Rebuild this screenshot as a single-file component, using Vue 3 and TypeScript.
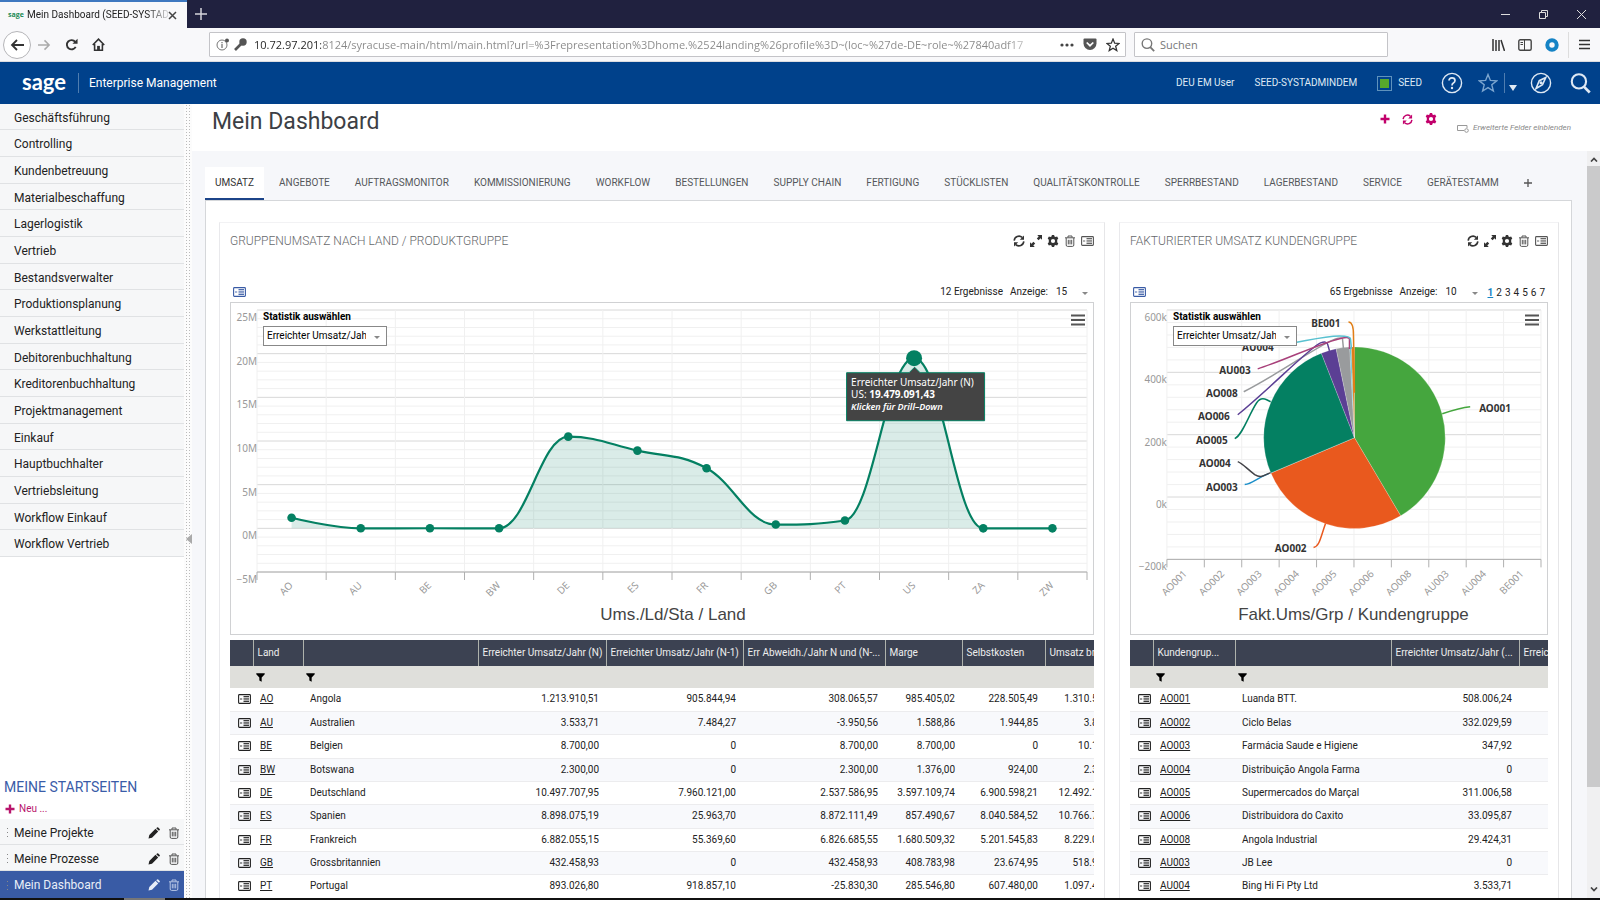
<script setup lang="ts">
import { ref } from 'vue'

interface Point { x: number; y: number }

const address = ref('10.72.97.201:8124/syracuse-main/html/main.html?url=%3Frepresentation%3Dhome.%2524landing%26profile%3D~(loc~%27de-DE~role~%27840adf17')

const modules = [
  'Geschäftsführung', 'Controlling', 'Kundenbetreuung', 'Materialbeschaffung', 'Lagerlogistik', 'Vertrieb',
  'Bestandsverwalter', 'Produktionsplanung', 'Werkstattleitung', 'Debitorenbuchhaltung', 'Kreditorenbuchhaltung',
  'Projektmanagement', 'Einkauf', 'Hauptbuchhalter', 'Vertriebsleitung', 'Workflow Einkauf', 'Workflow Vertrieb',
]
const startPages = ['Meine Projekte', 'Meine Prozesse', 'Mein Dashboard']
const activePage = ref('Mein Dashboard')

const tabs = [
  'UMSATZ', 'ANGEBOTE', 'AUFTRAGSMONITOR', 'KOMMISSIONIERUNG', 'WORKFLOW', 'BESTELLUNGEN', 'SUPPLY CHAIN', 'FERTIGUNG',
  'STÜCKLISTEN', 'QUALITÄTSKONTROLLE', 'SPERRBESTAND', 'LAGERBESTAND', 'SERVICE', 'GERÄTESTAMM',
]
const activeTab = ref('UMSATZ')
const tools = [
  { icon: 'refresh', label: 'Aktualisieren' },
  { icon: 'expand', label: 'Maximieren' },
  { icon: 'gear', label: 'Einstellungen' },
  { icon: 'trash', label: 'Löschen' },
  { icon: 'card', label: 'Details' },
]

const countryRows = [
  ['AO', 'Angola', '1.213.910,51', '905.844,94', '308.065,57', '985.405,02', '228.505,49', '1.310.500,00'],
  ['AU', 'Australien', '3.533,71', '7.484,27', '-3.950,56', '1.588,86', '1.944,85', '3.800,00'],
  ['BE', 'Belgien', '8.700,00', '0', '8.700,00', '8.700,00', '0', '10.100,00'],
  ['BW', 'Botswana', '2.300,00', '0', '2.300,00', '1.376,00', '924,00', '2.300,00'],
  ['DE', 'Deutschland', '10.497.707,95', '7.960.121,00', '2.537.586,95', '3.597.109,74', '6.900.598,21', '12.492.100,00'],
  ['ES', 'Spanien', '8.898.075,19', '25.963,70', '8.872.111,49', '857.490,67', '8.040.584,52', '10.766.700,00'],
  ['FR', 'Frankreich', '6.882.055,15', '55.369,60', '6.826.685,55', '1.680.509,32', '5.201.545,83', '8.229.000,00'],
  ['GB', 'Grossbritannien', '432.458,93', '0', '432.458,93', '408.783,98', '23.674,95', '518.900,00'],
  ['PT', 'Portugal', '893.026,80', '918.857,10', '-25.830,30', '285.546,80', '607.480,00', '1.097.400,00'],
]
const groupRows = [
  ['AO001', 'Luanda BTT.', '508.006,24'],
  ['AO002', 'Ciclo Belas', '332.029,59'],
  ['AO003', 'Farmácia Saude e Higiene', '347,92'],
  ['AO004', 'Distribuição Angola Farma', '0'],
  ['AO005', 'Supermercados do Marçal', '311.006,58'],
  ['AO006', 'Distribuidora do Caxito', '33.095,87'],
  ['AO008', 'Angola Industrial', '29.424,31'],
  ['AU003', 'JB Lee', '0'],
  ['AU004', 'Bing Hi Fi Pty Ltd', '3.533,71'],
]

/* Area chart: revenue per country in millions */
const area = { left: 26, top: 7, right: 856, bottom: 269 }
const areaStep = (area.right - area.left) / 12
const areaUnit = (area.bottom - area.top) / 30
const revenue = [
  ['AO', 1.214], ['AU', 0.004], ['BE', 0.009], ['BW', 0.002], ['DE', 10.498], ['ES', 8.898],
  ['FR', 6.882], ['GB', 0.432], ['PT', 0.893], ['US', 19.479], ['ZA', 0], ['ZW', 0],
] as [string, number][]
const points: Point[] = revenue.map(([, v], i) => ({
  x: area.left + areaStep * (i + 0.5),
  y: area.top + (25 - v) * areaUnit,
}))
const peak = points[9]
const zeroY = area.top + 25 * areaUnit

function spline(pts: Point[]): string {
  let path = `M${pts[0].x} ${pts[0].y}`
  let out: Point = { ...pts[0] }
  for (let i = 1; i < pts.length; i++) {
    const p = pts[i]
    const prev = pts[i - 1]
    const next = pts[i + 1]
    let left: Point = { ...p }
    let right: Point = { ...p }
    if (next) {
      left = { x: (1.5 * p.x + prev.x) / 2.5, y: (1.5 * p.y + prev.y) / 2.5 }
      right = { x: (1.5 * p.x + next.x) / 2.5, y: (1.5 * p.y + next.y) / 2.5 }
      const shift = ((right.y - left.y) * (right.x - p.x)) / (right.x - left.x) + p.y - right.y
      left.y += shift
      right.y += shift
      if (left.y > prev.y && left.y > p.y) {
        left.y = Math.max(prev.y, p.y)
        right.y = 2 * p.y - left.y
      } else if (left.y < prev.y && left.y < p.y) {
        left.y = Math.min(prev.y, p.y)
        right.y = 2 * p.y - left.y
      }
      if (right.y > next.y && right.y > p.y) {
        right.y = Math.max(next.y, p.y)
        left.y = 2 * p.y - right.y
      } else if (right.y < next.y && right.y < p.y) {
        right.y = Math.min(next.y, p.y)
        left.y = 2 * p.y - right.y
      }
    }
    path += ` C${out.x} ${out.y} ${left.x} ${left.y} ${p.x} ${p.y}`
    out = right
  }
  return path
}
const line = spline(points)
const fill = `${line} L${points[11].x} ${zeroY} L${points[0].x} ${zeroY} Z`

/* Pie chart: revenue per customer group */
const grid = { left: 36, top: 7, right: 411, bottom: 257 }
const gridStep = (grid.right - grid.left) / 10
const gridRow = (grid.bottom - grid.top) / 4
const groups = ['AO001', 'AO002', 'AO003', 'AO004', 'AO005', 'AO006', 'AO008', 'AU003', 'AU004', 'BE001']
const shares = [
  { value: 508006, color: '#45a63e' }, { value: 332030, color: '#e9591e' }, { value: 348, color: '#1c8fc9' },
  { value: 311007, color: '#048062' }, { value: 33096, color: '#5b3f94' }, { value: 29424, color: '#999b9d' },
  { value: 3534, color: '#59c1d0' }, { value: 6700, color: '#e17e16' },
]
const total = shares.reduce((sum, s) => sum + s.value, 0)
const center = { x: 224, y: 135, r: 91 }
let turned = 0
const slices = shares.map((s) => {
  const at = (t: number) => `${center.x + center.r * Math.sin(t)} ${center.y - center.r * Math.cos(t)}`
  const from = (turned / total) * Math.PI * 2
  turned += s.value
  const to = (turned / total) * Math.PI * 2
  return {
    color: s.color,
    d: `M${center.x} ${center.y} L${at(from)} A${center.r} ${center.r} 0 ${to - from > Math.PI ? 1 : 0} 1 ${at(to)} Z`,
  }
})
const leaders = [
  { color: '#45a63e', d: 'M312 111 Q330 105 340 104' },
  { color: '#e9591e', d: 'M195 221 C190 235 189 244 183 245' },
  { color: '#1c8fc9', d: 'M138 171 C125 176 122 181 114 182' },
  { color: '#434348', d: 'M140 170 L133 173 Q129 175 124 172 C116 166 112 161 107 159' },
  { color: '#048062', d: 'M140 99 L136 97 Q130 94 126 100 C118 112 112 132 104 136' },
  { color: '#999b9d', d: 'M213 46 L212 36 Q211 34 205 36 C190 41 150 70 113 89' },
  { color: '#5b3f94', d: 'M199 48 L197 41 Q196 38 190 40 C180 44 140 85 107 112' },
  { color: '#a8407a', d: 'M219 46 L219 36 Q219 34 212 35 C195 38 150 59 127 66' },
  { color: '#59c1d0', d: 'M221 46 L220 36 Q220 33 209 33 C190 33 170 40 150 42' },
  { color: '#e17e16', d: 'M224 90 L223 32 Q223 19 218 19' },
]
const pieLabels = [
  { t: 'AO001', x: 349, y: 109, a: 'start' }, { t: 'AO002', x: 176, y: 250, a: 'end' },
  { t: 'AO003', x: 107, y: 188, a: 'end' }, { t: 'AO004', x: 100, y: 164, a: 'end' },
  { t: 'AO005', x: 97, y: 141, a: 'end' }, { t: 'AO006', x: 99, y: 117, a: 'end' },
  { t: 'AO008', x: 107, y: 94, a: 'end' }, { t: 'AU003', x: 120, y: 71, a: 'end' },
  { t: 'AU004', x: 143, y: 48, a: 'end' }, { t: 'BE001', x: 210, y: 24, a: 'end' },
]
</script>

<template>
  <div class="window">
    <svg class="symbols" aria-hidden="true">
      <symbol id="refresh" viewBox="0 0 12 12"><path d="M1.2 5.6A4.8 4.8 0 0 1 9.2 2.4M10.8 6.4A4.8 4.8 0 0 1 2.8 9.6" fill="none" stroke="currentColor" stroke-width="1.6" /><path d="M11 .6v4.2H6.800zM1 11.4V7.200h4.200z" fill="currentColor" /></symbol>
      <symbol id="expand" viewBox="0 0 12 12"><path d="M7.200 0H12v4.800L10.500 3.300 8.600 5.200 6.800 3.400 8.700 1.500zM4.800 12H0V7.200l1.500 1.500L3.400 6.800 5.200 8.600 3.300 10.500z" fill="currentColor" /></symbol>
      <symbol id="gear" viewBox="0 0 12 12"><path fill-rule="evenodd" d="M4.900 0h2.200l.4 1.500 1.100.6 1.500-.5 1.200 1.900L10.200 4.700v2.600l1.100 1.200-1.200 1.900-1.500-.5-1.100.6-.4 1.500H4.900l-.4-1.500-1.100-.6-1.500.5L.7 8.500l1.100-1.200V4.700L.7 3.500l1.200-1.900 1.500.5 1.100-.6zM6 3.900a2.100 2.100 0 1 0 0 4.200 2.100 2.100 0 0 0 0-4.200z" fill="currentColor" /></symbol>
      <symbol id="trash" viewBox="0 0 12 12"><path d="M1 2.800h10M4 2.500V1h4v1.500M2.200 3v7q0 1.400 1.300 1.400h5q1.300 0 1.300-1.400V3M4.300 4.800v4.600M6 4.800v4.600M7.700 4.800v4.600" fill="none" stroke="currentColor" stroke-width="1" /></symbol>
      <symbol id="card" viewBox="0 0 13 10"><rect x=".6" y=".6" width="11.800" height="8.800" rx=".8" fill="none" stroke="currentColor" stroke-width="1.100" /><path d="M5.500 2.500h5.500M5.500 4.200h5.500M5.500 5.900h5.500M5.500 7.500h5.500M2 5h2.200" stroke="currentColor" stroke-width=".9" /></symbol>
      <symbol id="funnel" viewBox="0 0 10 10"><path d="M.3.400h9.400v1L6.300 5v4.700L3.700 8.200V5L.3 1.400z" fill="currentColor" /></symbol>
      <symbol id="plus" viewBox="0 0 10 10"><path d="M5 .5v9M.5 5h9" stroke="currentColor" stroke-width="2.400" /></symbol>
      <symbol id="pencil" viewBox="0 0 12 12"><path d="M.5 11.500l.8-3.500L7.500 1.800l2.700 2.700L4 10.700zM8.200 1.200l.9-.8q.6-.4 1.100 0l1.500 1.500q.4.600 0 1.100l-.8.800z" fill="currentColor" /></symbol>
      <symbol id="glass" viewBox="0 0 20 20"><circle cx="8.500" cy="8" r="6.800" fill="none" stroke="currentColor" stroke-width="2" /><path d="M13.200 13l5.600 5.600" stroke="currentColor" stroke-width="2.600" /></symbol>
      <symbol id="star" viewBox="0 0 20 20"><path d="M10 1.500l2.400 5.900 6.300.4-4.900 4 1.600 6.200-5.400-3.400L4.600 18l1.600-6.200-4.900-4 6.300-.4z" fill="none" stroke="currentColor" stroke-width="1.400" /></symbol>
      <symbol id="bold-star" viewBox="0 0 20 20"><path d="M10 1.500l2.400 5.900 6.300.4-4.900 4 1.600 6.200-5.400-3.400L4.600 18l1.600-6.200-4.900-4 6.300-.4z" fill="none" stroke="currentColor" stroke-width="1.800" /></symbol>
      <symbol id="bars" viewBox="0 0 14 12"><path d="M0 1.500h14M0 6h14M0 10.500h14" stroke="currentColor" stroke-width="2.200" /></symbol>
    </svg>

    <header class="titlebar">
      <div class="browser-tab">
        <span class="favicon">sage</span>
        <span class="tab-title">Mein Dashboard (SEED-SYSTADMIN)</span>
        <button class="plain" aria-label="Tab schließen"><svg width="9" height="9" viewBox="0 0 9 9"><path d="M1 1l7 7M8 1L1 8" stroke="#444" stroke-width="1.500" /></svg></button>
      </div>
      <button class="plain new-tab" aria-label="Neuer Tab"><svg width="12" height="12" viewBox="0 0 12 12"><path d="M6 0v12M0 6h12" stroke="#d5d5dc" stroke-width="1.500" /></svg></button>
      <div class="window-controls">
        <button class="plain" aria-label="Minimieren"><svg width="9" height="9" viewBox="0 0 9 9"><path d="M0 4.500h9" stroke="#ddd" /></svg></button>
        <button class="plain" aria-label="Wiederherstellen"><svg width="9" height="9" viewBox="0 0 9 9"><path d="M.5 2.500h6v6h-6zM2.500 2.500v-2h6v6h-2" fill="none" stroke="#ddd" /></svg></button>
        <button class="plain" aria-label="Schließen"><svg width="9" height="9" viewBox="0 0 9 9"><path d="M0 0l9 9M9 0L0 9" stroke="#ddd" /></svg></button>
      </div>
    </header>

    <div class="toolbar">
      <button class="plain back" aria-label="Zurück"><svg width="14" height="12" viewBox="0 0 14 12"><path d="M7 1L2 6l5 5M2 6h12" fill="none" stroke="#333" stroke-width="1.800" /></svg></button>
      <button class="plain nav-button" aria-label="Vor"><svg width="13" height="12" viewBox="0 0 14 12"><path d="M7 1l5 5-5 5M12 6H0" fill="none" stroke="#aaa" stroke-width="1.600" /></svg></button>
      <button class="plain nav-button" aria-label="Neu laden"><svg width="13" height="13" viewBox="0 0 14 14"><path d="M11.500 9.500A5 5 0 1 1 11 4.200" fill="none" stroke="#333" stroke-width="2" /><path d="M13.500.800v5.400H8z" fill="#333" /></svg></button>
      <button class="plain nav-button" aria-label="Startseite"><svg width="13" height="13" viewBox="0 0 14 14"><path d="M.8 7.500L7 1.200l6.200 6.300M2.800 6.500v6.700h8.400V6.500" fill="none" stroke="#333" stroke-width="1.700" /><path d="M5.500 8.500h3v4.500h-3z" fill="#333" /></svg></button>
      <div class="address-box">
        <svg width="13" height="13" viewBox="0 0 13 13"><circle cx="6" cy="7" r="5" fill="none" stroke="#777" /><path d="M6 6v4M6 4v1.200" stroke="#777" stroke-width="1.300" /><circle cx="11" cy="2.500" r="2" fill="#555" /></svg>
        <svg width="13" height="13" viewBox="0 0 13 13"><circle cx="9" cy="4" r="3.700" fill="#555" /><path d="M7.500 5.500L1 12" stroke="#555" stroke-width="2.600" /></svg>
        <input v-model="address" class="address" aria-label="Adresse" spellcheck="false">
        <button class="plain" aria-label="Seitenaktionen"><svg width="14" height="4" viewBox="0 0 14 4"><circle cx="2" cy="2" r="1.600" fill="#444" /><circle cx="7" cy="2" r="1.600" fill="#444" /><circle cx="12" cy="2" r="1.600" fill="#444" /></svg></button>
        <button class="plain" aria-label="Pocket"><svg width="14" height="13" viewBox="0 0 14 13"><path d="M1.500.5h11q1 0 1 1v4a6.500 6.500 0 0 1-13 0v-4q0-1 1-1z" fill="#555" /><path d="M3.700 4.500L7 7.700l3.300-3.200" fill="none" stroke="#fff" stroke-width="1.700" /></svg></button>
        <button class="plain" aria-label="Lesezeichen"><svg class="dark" width="14" height="14"><use href="#bold-star" /></svg></button>
      </div>
      <div class="search-box">
        <svg class="grey" width="14" height="14"><use href="#glass" /></svg>
        <input class="search" placeholder="Suchen" aria-label="Suchen">
      </div>
      <div class="toolbar-end">
        <button class="plain" aria-label="Bibliothek"><svg width="13" height="12" viewBox="0 0 13 12"><path d="M1 0v12M4 1v11M7 1v11M9 1l3.500 11" stroke="#333" stroke-width="1.500" /></svg></button>
        <button class="plain" aria-label="Sidebar"><svg width="14" height="12" viewBox="0 0 14 12"><rect x=".8" y=".8" width="12.400" height="10.400" rx="1.500" fill="none" stroke="#444" stroke-width="1.400" /><path d="M6.500 1v10" stroke="#444" /><path d="M2.500 3.500h2.500M2.500 5.500h2.500" stroke="#444" /></svg></button>
        <button class="plain" aria-label="Konto"><svg width="14" height="14" viewBox="0 0 14 14"><circle cx="7" cy="7" r="4.700" fill="none" stroke="#1583c5" stroke-width="4" /></svg></button>
        <span class="toolbar-rule"></span>
        <button class="plain dark" aria-label="Menü"><svg width="11" height="11" viewBox="0 0 11 11"><path d="M0 1.500h11M0 5.500h11M0 9.500h11" stroke="currentColor" stroke-width="1.500" /></svg></button>
      </div>
    </div>

    <header class="brandbar">
      <span class="logo">sage</span>
      <span class="product">Enterprise Management</span>
      <div class="account">
        <a href="#user">DEU EM User</a>
        <a href="#role">SEED-SYSTADMINDEM</a>
        <a href="#endpoint" class="endpoint"><span class="swatch"></span>SEED</a>
      </div>
      <div class="brand-icons">
        <button class="plain" aria-label="Hilfe"><svg width="22" height="22" viewBox="0 0 22 22"><circle cx="11" cy="11" r="9.600" fill="none" stroke="currentColor" stroke-width="1.400" /><path d="M8 8.600Q8 5.800 11 5.800t3 2.600Q14 10 12.400 10.900 11 11.700 11 13.500" fill="none" stroke="currentColor" stroke-width="1.700" /><circle cx="11" cy="16" r="1.200" fill="currentColor" /></svg></button>
        <button class="plain favourite" aria-label="Favoriten"><svg width="20" height="20"><use href="#star" /></svg></button>
        <button class="plain caret-button" aria-label="Favoritenliste"><svg width="8" height="6" viewBox="0 0 8 6"><path d="M0 0h8L4 6z" fill="currentColor" /></svg></button>
        <button class="plain compass" aria-label="Navigation"><svg width="22" height="22" viewBox="0 0 22 22"><circle cx="11" cy="11" r="9.600" fill="none" stroke="currentColor" stroke-width="1.400" /><path d="M15.800 5.500L9.300 8.700 6 16.500l6.500-3.800z" fill="none" stroke="currentColor" stroke-width="1.600" /><circle cx="11" cy="10.800" r="1.500" fill="currentColor" /></svg></button>
        <button class="plain" aria-label="Suche"><svg width="21" height="21"><use href="#glass" /></svg></button>
      </div>
    </header>

    <div class="body">
      <aside class="sidebar">
        <nav class="modules" aria-label="Module">
          <a v-for="m in modules" :key="m" class="module" href="#modul">{{ m }}</a>
        </nav>
        <section class="start-pages">
          <h2>MEINE STARTSEITEN</h2>
          <button class="plain add"><svg width="10" height="10"><use href="#plus" /></svg>Neu ...</button>
          <div v-for="p in startPages" :key="p" class="page-row" :class="{ active: p === activePage }">
            <span class="grip"></span>
            <a href="#seite" @click.prevent="activePage = p">{{ p }}</a>
            <button class="plain" :aria-label="p + ' bearbeiten'"><svg width="12" height="12"><use href="#pencil" /></svg></button>
            <button class="plain bin" :aria-label="p + ' löschen'"><svg width="12" height="12"><use href="#trash" /></svg></button>
          </div>
        </section>
      </aside>
      <div class="splitter"><button class="plain collapse" aria-label="Seitenleiste einklappen"></button></div>

      <main class="main">
        <div class="page-head">
          <h1>Mein Dashboard</h1>
          <div class="page-actions">
            <button class="plain" aria-label="Hinzufügen"><svg width="10" height="10"><use href="#plus" /></svg></button>
            <button class="plain" aria-label="Aktualisieren"><svg width="11" height="11"><use href="#refresh" /></svg></button>
            <button class="plain" aria-label="Einstellungen"><svg width="12" height="12"><use href="#gear" /></svg></button>
          </div>
          <a class="extended" href="#felder"><svg width="12" height="9" viewBox="0 0 12 9"><path d="M7 6.500H.5v-5h9.500v2.500" fill="none" stroke="#999" /><circle cx="9.500" cy="6.500" r="1.800" fill="none" stroke="#999" /></svg>Erweiterte Felder einblenden</a>
        </div>

        <div class="scroll-area">
          <div class="workspace">
            <div class="tabs" role="tablist">
              <button v-for="t in tabs" :key="t" class="plain tab" :class="{ active: t === activeTab }" role="tab" :aria-selected="t === activeTab" @click="activeTab = t">{{ t }}</button>
              <button class="plain tab add-tab" aria-label="Tab hinzufügen"><svg width="8" height="8" viewBox="0 0 8 8"><path d="M4 0v8M0 4h8" stroke="#555" stroke-width="1.300" /></svg></button>
            </div>

            <div class="panel">
              <section class="card">
                <div class="card-head">
                  <h3>GRUPPENUMSATZ NACH LAND / PRODUKTGRUPPE</h3>
                  <div class="tools">
                    <button v-for="t in tools" :key="t.icon" class="plain" :class="'tool-' + t.icon" :aria-label="t.label"><svg :width="t.icon === 'card' ? 13 : 12" :height="t.icon === 'card' ? 10 : 12"><use :href="'#' + t.icon" /></svg></button>
                  </div>
                </div>
                <div class="results">
                  <button class="plain details" aria-label="Details"><svg width="13" height="10"><use href="#card" /></svg></button>
                  <span class="count">12 Ergebnisse</span>
                  <label for="size-a">Anzeige:</label>
                  <span class="drop"><select id="size-a"><option>15</option></select></span>
                </div>
                <div class="chart">
                  <svg class="plot" viewBox="0 0 862 331" role="img" aria-label="Ums./Ld/Sta / Land">
                    <line v-for="i in 31" :key="'h' + i" :x1="area.left" :x2="area.right" :y1="area.top + (i - 1) * areaUnit" :y2="area.top + (i - 1) * areaUnit" :class="(i - 1) % 5 ? 'minor' : 'major'" />
                    <line v-for="i in 13" :key="'v' + i" :x1="area.left + (i - 1) * areaStep" :x2="area.left + (i - 1) * areaStep" :y1="area.top" :y2="area.bottom" class="minor" />
                    <line v-for="i in 13" :key="'t' + i" :x1="area.left + (i - 1) * areaStep" :x2="area.left + (i - 1) * areaStep" :y1="area.bottom" :y2="area.bottom + 8" class="axis" />
                    <line :x1="area.left" :x2="area.right" :y1="area.bottom" :y2="area.bottom" class="axis" />
                    <text v-for="(t, i) in ['25M', '20M', '15M', '10M', '5M', '0M', '−5M']" :key="t" class="scale" text-anchor="end" :x="area.left" :y="area.top + 11 + i * 5 * areaUnit">{{ t }}</text>
                    <text v-for="(r, i) in revenue" :key="r[0]" class="scale" text-anchor="end" :transform="`translate(${points[i].x + 2} ${area.bottom + 14}) rotate(-45)`">{{ r[0] }}</text>
                    <path :d="fill" fill="#048062" fill-opacity=".15" />
                    <path :d="line" fill="none" stroke="#048062" stroke-width="2.200" />
                    <circle v-for="(p, i) in points" :key="'p' + i" :cx="p.x" :cy="p.y" :r="i === 9 ? 8 : 4.300" fill="#048062" />
                    <text class="chart-title" x="442" y="317" text-anchor="middle">Ums./Ld/Sta / Land</text>
                    <g :transform="`translate(${peak.x - 68} ${peak.y + 14})`">
                      <path d="M.5.500H63l5.500-5.500L74 .500h64.500v48H.5z" fill="#444444" stroke="#048062" />
                      <text class="tip" x="5" y="14">Erreichter Umsatz/Jahr (N)</text>
                      <text class="tip" x="5" y="26">US: <tspan font-weight="700">19.479.091,43</tspan></text>
                      <text class="tip small" x="5" y="38">Klicken für Drill–Down</text>
                    </g>
                  </svg>
                  <div class="statistic left">
                    <label for="stat-a">Statistik auswählen</label>
                    <span class="drop"><select id="stat-a"><option>Erreichter Umsatz/Jahr (N)</option></select></span>
                  </div>
                  <button class="plain chart-menu" aria-label="Diagrammmenü"><svg width="14" height="12"><use href="#bars" /></svg></button>
                </div>
                <div class="table-clip">
                  <table class="countries">
                    <colgroup><col class="w-icon"><col class="w-code"><col class="w-name"><col class="w-a"><col class="w-b"><col class="w-c"><col class="w-d"><col class="w-e"><col class="w-f"></colgroup>
                    <thead>
                      <tr><th></th><th>Land</th><th></th><th>Erreichter Umsatz/Jahr (N)</th><th>Erreichter Umsatz/Jahr (N-1)</th><th>Err Abweidh./Jahr N und (N-...</th><th>Marge</th><th>Selbstkosten</th><th>Umsatz brutto</th></tr>
                      <tr class="filters"><td></td><td><button class="plain" aria-label="Land filtern"><svg width="9" height="9"><use href="#funnel" /></svg></button></td><td><button class="plain" aria-label="Name filtern"><svg width="9" height="9"><use href="#funnel" /></svg></button></td><td colspan="6"></td></tr>
                    </thead>
                    <tbody>
                      <tr v-for="r in countryRows" :key="r[0]">
                        <td class="icon-cell"><svg width="13" height="10"><use href="#card" /></svg></td>
                        <td><a href="#land">{{ r[0] }}</a></td>
                        <td>{{ r[1] }}</td>
                        <td v-for="(v, i) in r.slice(2)" :key="i" class="num">{{ v }}</td>
                      </tr>
                    </tbody>
                  </table>
                </div>
              </section>

              <section class="card">
                <div class="card-head">
                  <h3>FAKTURIERTER UMSATZ KUNDENGRUPPE</h3>
                  <div class="tools">
                    <button v-for="t in tools" :key="t.icon" class="plain" :class="'tool-' + t.icon" :aria-label="t.label"><svg :width="t.icon === 'card' ? 13 : 12" :height="t.icon === 'card' ? 10 : 12"><use :href="'#' + t.icon" /></svg></button>
                  </div>
                </div>
                <div class="results">
                  <button class="plain details" aria-label="Details"><svg width="13" height="10"><use href="#card" /></svg></button>
                  <span class="count">65 Ergebnisse</span>
                  <label for="size-b">Anzeige:</label>
                  <span class="drop"><select id="size-b"><option>10</option></select></span>
                  <nav class="pages" aria-label="Seiten"><a v-for="n in 7" :key="n" href="#seite" :class="{ current: n === 1 }">{{ n }}</a></nav>
                </div>
                <div class="chart">
                  <svg class="plot" viewBox="0 0 417 332" role="img" aria-label="Fakt.Ums/Grp / Kundengruppe">
                    <line v-for="i in 21" :key="'h' + i" :x1="grid.left" :x2="grid.right" :y1="grid.top + (i - 1) * gridRow / 5" :y2="grid.top + (i - 1) * gridRow / 5" :class="(i - 1) % 5 ? 'minor' : 'major'" />
                    <line v-for="i in 11" :key="'v' + i" :x1="grid.left + (i - 1) * gridStep" :x2="grid.left + (i - 1) * gridStep" :y1="grid.top" :y2="grid.bottom" class="minor" />
                    <line v-for="i in 11" :key="'t' + i" :x1="grid.left + (i - 1) * gridStep" :x2="grid.left + (i - 1) * gridStep" :y1="grid.bottom" :y2="grid.bottom + 8" class="axis" />
                    <line :x1="grid.left" :x2="grid.right" :y1="grid.bottom" :y2="grid.bottom" class="axis" />
                    <text v-for="(t, i) in ['600k', '400k', '200k', '0k', '−200k']" :key="t" class="scale" text-anchor="end" :x="grid.left" :y="grid.top + 11 + i * gridRow">{{ t }}</text>
                    <text v-for="(g, i) in groups" :key="g" class="scale" text-anchor="end" :transform="`translate(${grid.left + (i + 0.5) * gridStep + 2} ${grid.bottom + 15}) rotate(-45)`">{{ g }}</text>
                    <path v-for="(s, i) in slices" :key="'s' + i" :d="s.d" :fill="s.color" stroke="#fff" stroke-opacity=".4" stroke-width=".5" />
                    <path v-for="(l, i) in leaders" :key="'l' + i" :d="l.d" fill="none" :stroke="l.color" stroke-width="1.500" />
                    <text v-for="l in pieLabels" :key="l.t" class="pie-label" :x="l.x" :y="l.y" :text-anchor="l.a">{{ l.t }}</text>
                    <text class="chart-title" x="223" y="318" text-anchor="middle">Fakt.Ums/Grp / Kundengruppe</text>
                  </svg>
                  <div class="statistic right">
                    <label for="stat-b">Statistik auswählen</label>
                    <span class="drop"><select id="stat-b"><option>Erreichter Umsatz/Jahr (N)</option></select></span>
                  </div>
                  <button class="plain chart-menu" aria-label="Diagrammmenü"><svg width="14" height="12"><use href="#bars" /></svg></button>
                </div>
                <div class="table-clip">
                  <table class="customers">
                    <colgroup><col class="w-icon"><col class="w-group"><col class="w-label"><col class="w-a"><col class="w-b"></colgroup>
                    <thead>
                      <tr><th></th><th>Kundengrup...</th><th></th><th>Erreichter Umsatz/Jahr (...</th><th>Erreichter Umsatz</th></tr>
                      <tr class="filters"><td></td><td><button class="plain" aria-label="Kundengruppe filtern"><svg width="9" height="9"><use href="#funnel" /></svg></button></td><td><button class="plain" aria-label="Name filtern"><svg width="9" height="9"><use href="#funnel" /></svg></button></td><td colspan="2"></td></tr>
                    </thead>
                    <tbody>
                      <tr v-for="r in groupRows" :key="r[0]">
                        <td class="icon-cell"><svg width="13" height="10"><use href="#card" /></svg></td>
                        <td><a href="#gruppe">{{ r[0] }}</a></td>
                        <td>{{ r[1] }}</td>
                        <td class="num">{{ r[2] }}</td>
                        <td></td>
                      </tr>
                    </tbody>
                  </table>
                </div>
              </section>
            </div>
          </div>
          <div class="scrollbar" aria-hidden="true">
            <svg width="8" height="5" viewBox="0 0 8 5"><path d="M1 4.500l3-3 3 3" fill="none" stroke="#444" stroke-width="1.700" /></svg>
            <span class="thumb"></span>
            <svg width="8" height="5" viewBox="0 0 8 5"><path d="M1 .500l3 3 3-3" fill="none" stroke="#444" stroke-width="1.700" /></svg>
          </div>
        </div>
      </main>
    </div>
    <footer class="taskbar"></footer>
  </div>
</template>

<style>
body { margin: 0; }
</style>

<style scoped>
* { box-sizing: border-box; }
.window { display: flex; flex-direction: column; height: 100vh; overflow: hidden; background: #fff; color: #222; font: 10px/14px Roboto, "Liberation Sans", sans-serif; }
.symbols { position: absolute; width: 0; height: 0; }
svg { display: block; flex: none; }
a { color: inherit; text-decoration: none; }
h1, h2, h3 { margin: 0; font-weight: 400; }
.plain { display: flex; align-items: center; justify-content: center; padding: 0; border: 0; background: none; color: inherit; font: inherit; cursor: pointer; }
select, input { border: 0; outline: 0; background: transparent; color: inherit; font: inherit; }
.dark { color: #333; }
.grey { color: #777; }

.titlebar { display: flex; flex: none; height: 28px; background: #20213f; }
.browser-tab { display: flex; align-items: center; width: 187px; padding: 0 10px 0 8px; border-top: 2px solid #3e78c0; background: #f8f8fa; }
.favicon { width: 19px; color: #1a8a55; font: 700 7px/10px "Open Sans", sans-serif; }
.tab-title { flex: 1; overflow: hidden; color: #222; white-space: nowrap; mask-image: linear-gradient(90deg, #000 120px, transparent 145px); }
.new-tab { width: 28px; }
.window-controls { display: flex; gap: 10px; margin-left: auto; padding-right: 5px; }
.window-controls .plain { width: 28px; }

.toolbar { display: flex; flex: none; align-items: center; height: 34px; padding: 0 10px 0 3px; border-bottom: 1px solid #dcdce0; background: #f8f8fa; font: 11px/14px "Open Sans", "Noto Sans", sans-serif; }
.back { width: 28px; height: 28px; border: 1px solid #b5b5b8; border-radius: 50%; background: #fff; }
.nav-button { width: 27px; height: 27px; }
.address-box, .search-box { display: flex; align-items: center; height: 25px; border: 1px solid #c4c4c8; border-radius: 1px; background: #fff; }
.address-box { flex: 1; gap: 5px; min-width: 0; margin-left: 97px; padding: 0 3px 0 6px; }
.address-box .plain { width: 18px; }
.address { flex: 1; min-width: 0; margin: 0 8px 0 0; padding: 0 0 0 2px; background: linear-gradient(90deg, #222 69px, #888 69px, #888 calc(100% - 40px), transparent); background-clip: text; color: transparent; }
.search-box { width: 254px; margin-left: 8px; padding: 0 6px; gap: 5px; }
.search { width: 200px; padding: 0; }
.search::placeholder { color: #777; opacity: 1; }
.toolbar-end { display: flex; align-items: center; gap: 13px; margin-left: 104px; }
.toolbar-rule { width: 1px; height: 26px; margin: 0 -3px 0 -4px; background: #ddd; }

.brandbar { display: flex; flex: none; align-items: center; height: 42px; padding: 0 9px 0 22px; background: #00418b; color: #dfe9f4; }
.logo { padding: 0 12px 3px 0; border-right: 1px solid #4f7db0; color: #fff; font: 700 22px/17px Lato, "Open Sans", sans-serif; }
.product { margin-left: 10px; color: #fff; font-size: 12px; }
.account { display: flex; align-items: center; gap: 20px; margin-left: auto; }
.endpoint { display: flex; align-items: center; gap: 6px; }
.swatch { width: 15px; height: 15px; border: 3px solid #00418b; outline: 1px solid #5f92bd; outline-offset: -1px; background: #57a82c; }
.brand-icons { display: flex; align-items: center; margin-left: 19px; }
.favourite { margin: 0 6px 0 15px; color: #7ba5cf; }
.caret-button { height: 20px; margin-right: 13px; padding: 10px 0 0 4px; border-left: 1px solid #4f7db0; }
.compass { margin-right: 18px; }

.body { display: flex; flex: 1; min-height: 0; }
.sidebar { display: flex; flex: none; flex-direction: column; justify-content: space-between; width: 184px; font-size: 12px; }
.modules, .start-pages { display: flex; flex-direction: column; }
.module { height: 27px; padding: 1px 0 0 14px; border-bottom: 1px solid #e0e2e4; background: #f6f7f8; line-height: 26px; }
.module:nth-child(3n + 1) { height: 26px; }
.start-pages h2 { padding-left: 4px; color: #3a5ca8; font-size: 14px; line-height: 22px; }
.add { align-self: flex-start; gap: 4px; height: 21px; padding-left: 5px; color: #b8146c; font-size: 10px; }
.page-row { display: flex; align-items: center; height: 26px; padding-top: 2px; border-bottom: 1px solid #e0e2e4; background: #f6f7f8; }
.page-row:last-child { height: 27px; }
.page-row a { flex: 1; }
.page-row .plain { width: 20px; }
.page-row.active { border-color: #395ba5; background: #395ba5; color: #e8eef8; }
.bin { color: #555; }
.active .bin { color: #b9c8e6; }
.grip { width: 1px; height: 9px; margin: 0 6px 0 7px; background: repeating-linear-gradient(#888 0 1px, transparent 1px 4px); }
.splitter { display: flex; flex: none; align-items: center; justify-content: flex-end; width: 8px; background: radial-gradient(circle, #bbb 0 1px, transparent 1px) 1px 0 / 3px 3px #fcfcfc; }
.collapse { width: 0; height: 0; margin-top: 76px; border: solid transparent; border-width: 5px 6px 5px 0; border-right-color: #aaa; }

.main { display: flex; flex: 1; flex-direction: column; min-width: 0; }
.page-head { display: flex; flex: none; align-items: flex-start; height: 47px; padding: 0 29px 0 20px; }
h1 { flex: 1; color: #3d3f45; font-size: 23px; line-height: 36px; }
.page-actions { display: flex; align-items: center; gap: 12px; margin: 9px 20px 0 0; color: #c2006b; }
.extended { display: flex; align-items: center; gap: 4px; margin-top: 17px; color: #888; font-size: 8px; font-style: italic; }
.scroll-area { display: flex; flex: 1; min-height: 0; background: #f6f7fa; }
.workspace { display: flex; flex: 1; flex-direction: column; min-width: 0; padding: 16px 15px 0 13px; }
.tabs { display: flex; flex: none; gap: 5px; height: 33px; }
.tab { padding: 0 10px; border-bottom: 2px solid transparent; color: #55575a; white-space: nowrap; }
.tab.active { border-color: #1c4489; background: #fff; color: #333; }
.panel { display: grid; flex: 1; grid-template-columns: 886fr 440fr; gap: 14px; min-height: 0; padding: 21px 12px 0 13px; border: solid #d5d7da; border-width: 1px 1px 0; background: #fff; overflow: hidden; }
.card { display: flex; flex-direction: column; min-width: 0; padding: 0 10px; border: 1px solid #f2f2f4; border-right-color: #e6e6e8; border-left-color: #e9e9ec; }
.card-head { display: flex; align-items: center; justify-content: space-between; height: 36px; color: #66686b; }
h3 { font-size: 12px; font-weight: 300; white-space: nowrap; }
.tools { display: flex; align-items: center; gap: 5px; color: #333; }
.tool-trash, .tool-card { color: #555; }
.results { display: flex; align-items: center; height: 43px; padding-top: 23px; white-space: nowrap; color: #222; }
.results label { margin: 0 8px 0 7px; }
.details { margin: 0 auto 0 3px; color: #395ba5; }
.drop { position: relative; display: block; }
.drop::after { position: absolute; top: 50%; right: 6px; border: solid transparent; border-width: 3px 3px 0; border-top-color: #888; content: ""; pointer-events: none; }
.drop select { display: block; width: 100%; margin: 0; padding: 0; appearance: none; }
.results .drop { width: 38px; }
.pages { display: flex; gap: 3px; margin: 2px 3px 0 4px; }
.pages .current { color: #1683c4; font-weight: 700; text-decoration: underline; }
.chart { position: relative; border: 1px solid #d0d1d3; background: #fff; }
.plot { width: 100%; height: auto; overflow: hidden; }
.minor { stroke: #f0f0f0; stroke-width: 1; }
.major { stroke: #d8d8d8; stroke-width: 1; }
.axis { stroke: #b0b0b0; stroke-width: 1; }
.scale { fill: #999; font: 10px "Noto Sans", sans-serif; }
.chart-title { fill: #444; font: 17px "Liberation Sans", Arial, sans-serif; }
.tip { fill: #fff; font: 10px "Noto Sans", sans-serif; }
.tip.small { font-size: 9px; font-style: italic; font-weight: 600; }
.pie-label { fill: #333; font: 700 10px "Noto Sans", sans-serif; }
.statistic { position: absolute; top: 7px; width: 124px; color: #000; }
.statistic.left { left: 32px; }
.statistic.right { left: 42px; }
.statistic label { font-weight: 700; }
.statistic .drop { height: 20px; margin-top: 2px; border: 1px solid #888; background: #fff; }
.statistic select { height: 18px; padding: 0 20px 0 3px; }
.chart-menu { position: absolute; top: 11px; right: 8px; color: #555; }
.table-clip { flex: 1; margin-top: 5px; overflow: hidden; }
table { border-collapse: collapse; table-layout: fixed; }
.countries { width: 899px; }
.customers { width: 526px; }
.w-icon { width: 23px; } .w-code { width: 50px; } .w-name { width: 175px; } .w-a { width: 128px; } .w-b { width: 137px; }
.w-c { width: 142px; } .w-d { width: 77px; } .w-e { width: 83px; } .w-f { width: 84px; } .w-group { width: 82px; } .w-label { width: 156px; }
th { height: 26px; padding: 0 4px; overflow: hidden; border-left: 1px solid #aeb2ac; background: #3c4252; color: #eee; font-weight: 400; text-align: left; white-space: nowrap; }
th:first-child { border-left: 0; }
.filters td { height: 22px; padding: 0 3px; border: 0; background: #dfdfdb; color: #000; }
tbody tr { height: 23px; }
tbody tr:nth-child(3n) { height: 24px; }
tbody tr:nth-child(even) { background: #f8f9fc; }
tbody td { padding: 0 7px; border-bottom: 1px solid #ececee; line-height: 14px; white-space: nowrap; }
tbody td a { text-decoration: underline; }
tbody .icon-cell { padding: 0 2px 0 8px; }
.num { text-align: right; }
.scrollbar { display: flex; flex: none; flex-direction: column; align-items: center; width: 13px; padding: 6px 0; background: #f0f0f1; }
.thumb { flex: 1; width: 100%; margin: 4px 0 100px; background: #cacacb; }
.taskbar { flex: none; height: 2px; background: linear-gradient(90deg, #111 124px, #777 124px 165px, #111 165px); }
</style>
